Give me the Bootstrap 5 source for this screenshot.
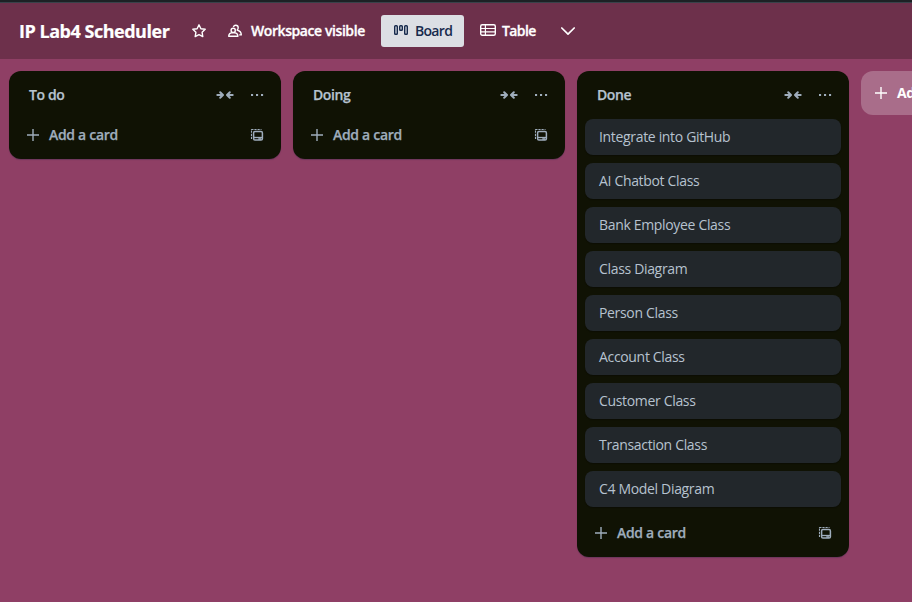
<!DOCTYPE html>
<html lang="en">
<head>
<meta charset="utf-8">
<meta name="viewport" content="width=device-width, initial-scale=1">
<title>IP Lab4 Scheduler</title>
<link href="https://cdn.jsdelivr.net/npm/bootstrap@5.3.0/dist/css/bootstrap.min.css" rel="stylesheet">
<style>
body{font-family:"Open Sans","Noto Sans",sans-serif;font-size:14px;line-height:20px;background:#8f3f65;height:100vh;overflow:hidden}
svg{display:block;flex:none;fill:none;stroke:currentColor}
.topline{height:3px;background:#1d2125;border-bottom:1px solid #39424a}
.board-bar{height:56px;background:#6d304b;color:#fff;padding:0 0 0 19px}
.board-title{font-size:18px;font-weight:700;letter-spacing:-.48px;width:151px;margin:0;line-height:24px;-webkit-text-stroke:.2px}
.star{margin-left:21px}
.bar-item{font-weight:600;height:32px;margin-left:16px;-webkit-text-stroke:.3px}
.visibility{margin-left:20px}
.visibility span{width:114px;margin-left:8px;letter-spacing:-.42px}
.view-on{background:#dcdfe4;color:#172b4d;border-radius:3px;width:83px;padding-left:12px;-webkit-text-stroke:0}
.view-label{margin-left:6px;letter-spacing:-.7px}
.table-label{width:34px;letter-spacing:-.6px}
.more-views{margin-left:24px}
.lists{padding:12px 0 0 9px;gap:12px}
.list-col{width:272px;flex:none;background:#101204;border-radius:12px;padding:8px 8px 8.4px;color:#9fadbc;box-shadow:0 1px 1px #091e4240}
.list-head{height:32px;margin-bottom:8px;padding:0 8px 0 12px}
.list-head h2{font-size:14px;line-height:20px;font-weight:600;color:#b6c2cf;margin:0;letter-spacing:-.4px;-webkit-text-stroke:.25px}
.list-menu{margin-left:15px}
.task{height:36px;background:#22272b;color:#b6c2cf;border-radius:8px;padding:8px 14px;box-shadow:0 1px 1px #03040442;letter-spacing:-.33px}
.task-stack{gap:8px;margin-bottom:10px}
.add-row{height:32px;padding:0 8px;font-weight:600;letter-spacing:-.3px;-webkit-text-stroke:.25px}
.add-list{width:272px;height:44px;flex:none;border-radius:12px;background:#a96d8a;color:#fff;font-weight:700;padding:0 12px;letter-spacing:-.3px}
</style>
</head>
<body>
<svg width="0" height="0" class="position-absolute" aria-hidden="true">
<symbol id="plus" viewBox="0 0 16 16"><path d="M8 2v12M2 8h12" stroke-width="1.4"/></symbol>
<symbol id="collapse" viewBox="0 0 18 10"><path d="M1.3 5h5.4M4.2 2.2 7 5 4.2 7.8M16.7 5h-5.4M13.8 2.2 11 5l2.8 2.8" stroke-width="2" stroke-linecap="round" stroke-linejoin="round"/></symbol>
<symbol id="dots" viewBox="0 0 16 16"><path d="M2 7h2.1v2H2zM7 7h2.1v2H7zM12 7h2.1v2H12z" fill="currentColor" stroke="none"/></symbol>
<symbol id="template" viewBox="0 0 16 16"><path d="M2.5 12V2.5H12.5" stroke-width="1.1" stroke-dasharray="2.2 .9"/><rect x="4.6" y="4.6" width="8.8" height="8.4" rx="1.3" stroke-width="1.5"/><path d="M5 10.5h8" stroke-width="1.3"/><path d="M9.3 12h3" stroke-width="1.6"/></symbol>
</svg>
<div class="topline"></div>
<header class="board-bar d-flex align-items-center">
  <h1 class="board-title text-nowrap">IP Lab4 Scheduler</h1>
  <svg class="star" width="16" height="16" viewBox="0 0 16 16"><path d="m8 1.8 1.9 3.9 4.3.6-3.1 3 .7 4.3L8 11.6l-3.8 2 .7-4.3-3.1-3 4.3-.6z" stroke-width="1.4" stroke-linejoin="round"/></svg>
  <div class="bar-item visibility d-flex align-items-center">
    <svg width="16" height="16" viewBox="0 0 16 16"><path d="M1.7 13.3c0-2 1.5-3.7 4.6-3.7s4.6 1.7 4.6 3.7z" stroke-width="1.4" stroke-linejoin="round"/><circle cx="6.2" cy="7.4" r="2.1" stroke-width="1.4"/><path d="M6.4 4c.4-1.2 1.3-1.8 2.3-1.8 1.5 0 2.5 1.1 2.5 2.5 0 1-.4 1.8-1 2.3 2.6.8 4.1 2.6 4.1 4.9h-2.1" stroke-width="1.4" stroke-linejoin="round"/></svg>
    <span class="text-nowrap">Workspace visible</span>
  </div>
  <div class="bar-item view-on d-flex align-items-center">
    <svg width="16" height="16" viewBox="0 0 16 16"><rect x="1.7" y="2.7" width="2.6" height="8.6" rx=".8" stroke-width="1.4"/><rect x="6.7" y="2.7" width="2.6" height="4.6" rx=".8" stroke-width="1.4"/><rect x="11.7" y="2.7" width="2.6" height="8.6" rx=".8" stroke-width="1.4"/></svg>
    <span class="view-label">Board</span>
  </div>
  <div class="bar-item d-flex align-items-center">
    <svg width="16" height="16" viewBox="0 0 16 16"><rect x=".7" y="1.7" width="14.6" height="10.6" rx="1.5" stroke-width="1.4"/><path d="M1 5.5h14M1 8.8h14M5.4 2v10" stroke-width="1.2"/></svg>
    <span class="view-label table-label">Table</span>
  </div>
  <svg class="more-views" width="16" height="16" viewBox="0 0 16 16"><path d="m1.8 5 6.2 6.2L14.2 5" stroke-width="1.7" stroke-linecap="round" stroke-linejoin="round"/></svg>
</header>
<main class="lists d-flex align-items-start">
  <section class="list-col">
    <div class="list-head d-flex align-items-center"><h2 class="me-auto">To do</h2><svg width="18" height="10"><use href="#collapse"/></svg><svg class="list-menu" width="16" height="16"><use href="#dots"/></svg></div>
    <div class="add-row d-flex align-items-center"><svg width="16" height="16"><use href="#plus"/></svg><span class="ms-2 me-auto">Add a card</span><svg width="16" height="16"><use href="#template"/></svg></div>
  </section>
  <section class="list-col">
    <div class="list-head d-flex align-items-center"><h2 class="me-auto">Doing</h2><svg width="18" height="10"><use href="#collapse"/></svg><svg class="list-menu" width="16" height="16"><use href="#dots"/></svg></div>
    <div class="add-row d-flex align-items-center"><svg width="16" height="16"><use href="#plus"/></svg><span class="ms-2 me-auto">Add a card</span><svg width="16" height="16"><use href="#template"/></svg></div>
  </section>
  <section class="list-col">
    <div class="list-head d-flex align-items-center"><h2 class="me-auto">Done</h2><svg width="18" height="10"><use href="#collapse"/></svg><svg class="list-menu" width="16" height="16"><use href="#dots"/></svg></div>
    <div class="task-stack d-flex flex-column">
      <div class="task">Integrate into GitHub</div>
      <div class="task">AI Chatbot Class</div>
      <div class="task">Bank Employee Class</div>
      <div class="task">Class Diagram</div>
      <div class="task">Person Class</div>
      <div class="task">Account Class</div>
      <div class="task">Customer Class</div>
      <div class="task">Transaction Class</div>
      <div class="task">C4 Model Diagram</div>
    </div>
    <div class="add-row d-flex align-items-center"><svg width="16" height="16"><use href="#plus"/></svg><span class="ms-2 me-auto">Add a card</span><svg width="16" height="16"><use href="#template"/></svg></div>
  </section>
  <div class="add-list d-flex align-items-center"><svg width="16" height="16"><use href="#plus"/></svg><span class="ms-2">Add another list</span></div>
</main>
<script src="https://cdn.jsdelivr.net/npm/bootstrap@5.3.0/dist/js/bootstrap.bundle.min.js"></script>
</body>
</html>
